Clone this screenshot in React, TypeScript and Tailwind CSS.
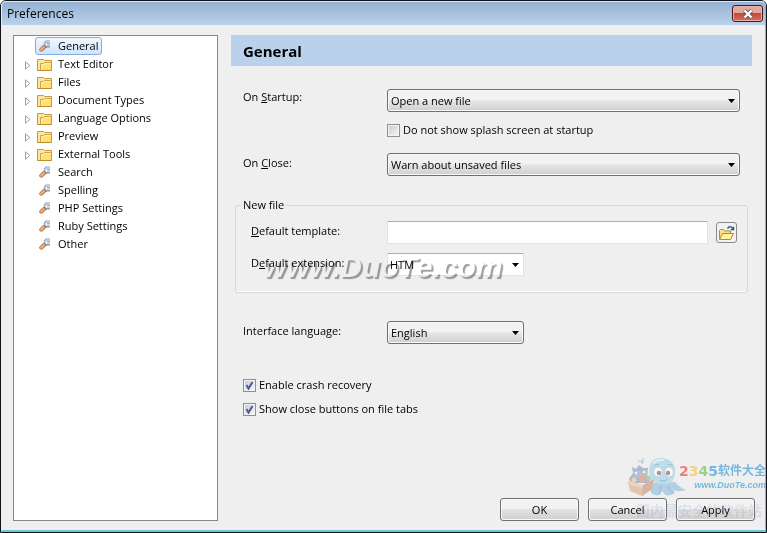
import type { ReactNode } from "react";

const tree = [
  { name: "General", folder: false, active: true },
  { name: "Text Editor", folder: true },
  { name: "Files", folder: true },
  { name: "Document Types", folder: true },
  { name: "Language Options", folder: true },
  { name: "Preview", folder: true },
  { name: "External Tools", folder: true },
  { name: "Search", folder: false },
  { name: "Spelling", folder: false },
  { name: "PHP Settings", folder: false },
  { name: "Ruby Settings", folder: false },
  { name: "Other", folder: false },
];

function FolderIcon() {
  return (
    <svg viewBox="0 0 15 13" className="h-[13px] w-[15px] shrink-0">
      <path d="M.5 12.5V1.500h6l1 1h7v10z" fill="#fbe6a0" stroke="#c89a3e" />
      <path d="M3.500 12V5.500h3l1-1h7" fill="none" stroke="#d0a246" />
      <path d="M4 12V6.500h3l1-1h6V12z" fill="#ffe074" />
      <path d="M4.500 11.500V6.500h3l1-1H14" fill="none" stroke="#fff0ae" />
      <path d="M.5 12.500h14" stroke="#c08c2a" />
    </svg>
  );
}

function WrenchIcon() {
  return (
    <svg viewBox="0 0 12 12" className="h-3 w-3 shrink-0">
      <path d="M10.800 1.500H7.200L5.700 3V5.800L7 7.200 8.500 6.500H10.800" fill="none" stroke="#8e99ad" strokeWidth="1.800" />
      <path d="M10.500 1.500H7.400L6 3.100V5.500L7.200 6.600" fill="none" stroke="#d5dde9" strokeWidth=".8" />
      <path d="M8 3.800h3" stroke="#8e99ad" strokeWidth="1.200" />
      <path d="M2.300 9.700 5 7" stroke="#b0713f" strokeWidth="4" strokeLinecap="round" />
      <path d="M2.200 9.600 4.700 7.100" stroke="#e4b48c" strokeWidth="2.200" strokeLinecap="round" />
    </svg>
  );
}

function OpenFileIcon() {
  return (
    <svg viewBox="0 0 17 16" className="h-4 w-[17px]">
      <path d="M1.500 14V5.500l1-1h3l1.200 1.500h5.800V8" fill="#f8e08c" stroke="#b98a2c" />
      <path d="M1.500 14.500 4.500 8.500H15.500L12.500 14.500z" fill="#fdf3a0" stroke="#b98a2c" strokeLinejoin="round" />
      <path d="M9.500 3.500Q12 0 14.500 3" fill="none" stroke="#24507f" strokeWidth="1.300" />
      <path d="M16.200 1.200V5.200H12.200z" fill="#24507f" />
    </svg>
  );
}

function Octopus() {
  return (
    <svg viewBox="0 0 60 42" className="-mr-2 h-[42px] w-[60px] opacity-50">
      <path d="M26 27Q20 37 28 39 34 40 35 34 37 41 44 39 50 36 45 33 50 37 59 34 53 32 48 26z" fill="#76b2d8" />
      <path d="M33 30Q35 37 31 39M41 30Q42 35 47 37" fill="none" stroke="#4d8fbd" strokeWidth="1.200" />
      <path d="M22 15C22 5 29 1 36 2 45 3 49 10 48 17 47 26 43 29 36 28 27 28 22 23 22 15z" fill="#8bcce6" />
      <path d="M27 7Q31 3 36 4" fill="none" stroke="#d6f1fa" strokeWidth="2" strokeLinecap="round" />
      <path d="M27 10Q30 7 32 9M41 9Q44 7 46 10" fill="none" stroke="#4585a8" />
      <ellipse cx="31" cy="16" rx="4.500" ry="5" fill="#fff" stroke="#6f9cb6" strokeWidth=".7" />
      <ellipse cx="42" cy="16" rx="4.500" ry="5" fill="#fff" stroke="#6f9cb6" strokeWidth=".7" />
      <circle cx="32" cy="17" r="2.300" fill="#584341" />
      <circle cx="41" cy="17" r="2.300" fill="#584341" />
      <path d="M33 24Q37 27 40 23" fill="none" stroke="#457b9a" />
      <path d="M6 17 5 11 9 13 12 9 16 12 21 12 20 20 24 22 22 27H4L2 23z" fill="#6d86ad" />
      <circle cx="10" cy="18" r="4" fill="#7797cc" />
      <circle cx="17" cy="17" r="3.500" fill="#8891aa" />
      <circle cx="9" cy="17" r="1.200" fill="#fff" />
      <circle cx="17" cy="16" r="1.200" fill="#fff" />
      <circle cx="15" cy="23" r="3" fill="#e66c4a" />
      <circle cx="21" cy="22" r="2.500" fill="#72b060" />
      <circle cx="7" cy="24" r="2.500" fill="#e7c44e" />
      <path d="M1 25 16 29 27 23 25 33 15 40 3 35z" fill="#d99a70" />
      <path d="M16 29 27 23 25 33 15 40z" fill="#c07b57" />
      <path d="M1 25 0 28 15 32 16 29z" fill="#edbd96" />
      <path d="M11 5h4v3M16 2v5" fill="none" stroke="#7d93b0" />
    </svg>
  );
}

function Arrow() {
  return (
    <svg viewBox="0 0 7 4" className="pointer-events-none absolute right-[5px] top-[10px] h-1 w-[7px]">
      <path d="M0 0h7L3.500 4z" />
    </svg>
  );
}

function Select({ id, value, className }: { id: string; value: string; className: string }) {
  return (
    <div className={`relative ${className}`}>
      <select
        id={id}
        className="block h-[23px] w-full appearance-none rounded-[3px] border border-[#707070] bg-linear-to-b from-[#f2f2f2] from-45% via-[#e4e4e4] via-55% to-[#cfcfcf] px-[3px] shadow-[inset_0_0_0_1px_#f8f8f8]"
      >
        <option>{value}</option>
      </select>
      <Arrow />
    </div>
  );
}

function Check({ label, checked }: { label: string; checked?: boolean }) {
  return (
    <label className="flex h-4 w-fit items-center gap-[3px]">
      <span className="relative flex">
        <input
          type="checkbox"
          defaultChecked={checked}
          className="peer h-[13px] w-[13px] appearance-none border border-[#8e8f8f] bg-linear-to-br from-[#c4cad4] to-[#f8f8f8] shadow-[inset_0_0_0_1px_#f4f4f4]"
        />
        <svg
          viewBox="0 0 13 13"
          className="pointer-events-none absolute inset-0 hidden h-[13px] w-[13px] peer-checked:block"
        >
          <path d="M3.500 6 5.500 9.500 9.500 3" fill="none" stroke="#4d5c96" strokeWidth="2" />
        </svg>
      </span>
      {label}
    </label>
  );
}

function Button({ children }: { children: ReactNode }) {
  return (
    <button className="h-[23px] w-[79px] rounded-[3px] border border-[#707070] bg-linear-to-b from-[#f3f3f3] from-45% via-[#e2e2e2] via-50% to-[#d0d0d0] shadow-[inset_0_0_0_1px_#f8f8f8]">
      {children}
    </button>
  );
}

export default function App() {
  return (
    <div className="min-h-screen bg-white">
      <div className="relative flex min-h-screen flex-col rounded-t-md border border-[#10141c] bg-[#efefef] font-['Open_Sans',sans-serif] text-[11px] leading-4 text-black">
        <div className="flex grow flex-col rounded-t-[5px] border border-b-2 border-l-[#e4edf5] border-t-[#dce9f5] border-r-[#5cc8ef] border-b-[#72c4d8]">
          <header className="flex h-[23px] items-center justify-between rounded-t-[4px] bg-linear-to-b from-[#96b2d2] to-[#b9d1ea] pl-[5px] pr-[2px]">
            <h1 className="text-xs">Preferences</h1>
            <button
              aria-label="Close"
              className="flex h-[17px] w-[31px] items-center justify-center rounded-[3px] border border-[#4b1822] bg-linear-to-b from-[#e2a79c] from-45% via-[#c14a35] via-50% to-[#d4705c] shadow-[inset_0_0_0_1px_#e6b0a5]"
            >
              <svg viewBox="0 0 12 10" className="h-[10px] w-3">
                <path d="M2.500 1.500 9.500 8.500M9.500 1.500 2.500 8.500" stroke="#5b5560" strokeWidth="4" />
                <path d="M2.500 1.500 9.500 8.500M9.500 1.500 2.500 8.500" stroke="#fff" strokeWidth="2.400" />
              </svg>
            </button>
          </header>

          <div className="flex grow gap-[13px] pb-[9px] pl-[11px] pr-[10px] pt-[10px]">
            <nav className="w-[205px] shrink-0 border border-[#828790] bg-white pt-px">
              <ul>
                {tree.map((item) => (
                  <li key={item.name} className="flex h-[18px] items-center pl-[11px]">
                    <svg viewBox="0 0 6 9" className="mt-0.5 h-[9px] w-[6px]">
                      {item.folder && <path d="M.5.8V8.200L4.800 4.500z" fill="#fff" stroke="#a0a0a0" />}
                    </svg>
                    <a
                      href="#"
                      className={
                        item.active
                          ? "ml-1 flex h-[18px] items-center rounded-[3px] border border-[#84acdd] bg-linear-to-b from-[#f0f8ff] to-[#cfe5fb] pr-[3px]"
                          : "ml-1 flex h-[18px] items-center border border-transparent pr-[3px]"
                      }
                    >
                      <span className="flex w-[22px] pl-px">
                        {item.folder ? (
                          <FolderIcon />
                        ) : (
                          <span className="pl-[2px]">
                            <WrenchIcon />
                          </span>
                        )}
                      </span>
                      {item.name}
                    </a>
                  </li>
                ))}
              </ul>
            </nav>

            <main className="flex grow flex-col">
              <h2 className="mr-[3px] flex h-[31px] items-center bg-[#b9d1ea] pl-3 text-[15px] font-bold">General</h2>

              <form className="mr-[3px] flex flex-col pt-[23px]">
                <div className="flex pl-3 pr-3">
                  <label htmlFor="startup" className="w-36 leading-4">
                    On <u>S</u>tartup:
                  </label>
                  <Select id="startup" value="Open a new file" className="grow" />
                </div>
                <div className="mt-[10px] pl-[156px]">
                  <Check label="Do not show splash screen at startup" />
                </div>
                <div className="mt-[15px] flex pl-3 pr-3">
                  <label htmlFor="close" className="w-36 leading-5">
                    On <u>C</u>lose:
                  </label>
                  <Select id="close" value="Warn about unsaved files" className="grow" />
                </div>

                <fieldset className="ml-1 mr-1 mt-[21px] rounded-[3px] border border-[#d5d9dc] pb-4 pl-[15px] pr-[10px] shadow-[inset_0_-1px_0_#fff]">
                  <legend className="-ml-[10px] px-[2px]">New file</legend>
                  <div className="mt-2 flex">
                    <label htmlFor="template" className="w-[136px] leading-5">
                      <u>D</u>efault template:
                    </label>
                    <input
                      id="template"
                      type="text"
                      className="h-[23px] min-w-0 grow border border-[#e2e3ea] border-t-[#abadb3] bg-white px-1"
                    />
                    <button
                      type="button"
                      aria-label="Browse"
                      className="ml-2 mt-px flex h-[21px] w-[21px] items-center justify-center rounded-[3px] border border-[#8a8a8a] bg-[#f1f1f1]"
                    >
                      <OpenFileIcon />
                    </button>
                  </div>
                  <div className="mt-[9px] flex">
                    <label htmlFor="extension" className="w-[136px] leading-5">
                      D<u>e</u>fault extension:
                    </label>
                    <div className="relative w-[137px]">
                      <input
                        id="extension"
                        type="text"
                        defaultValue="HTM"
                        className="block h-[23px] w-full border border-[#e2e3ea] border-t-[#abadb3] bg-white px-[2px]"
                      />
                      <Arrow />
                    </div>
                  </div>
                </fieldset>

                <div className="mt-7 flex pl-3">
                  <label htmlFor="language" className="w-36 leading-5">
                    Interface language:
                  </label>
                  <Select id="language" value="English" className="w-[137px]" />
                </div>
                <div className="mt-[33px] flex flex-col gap-2 pl-3">
                  <Check label="Enable crash recovery" checked />
                  <Check label="Show close buttons on file tabs" checked />
                </div>
              </form>

              <div className="mt-auto flex justify-end gap-[9px]">
                <Button>OK</Button>
                <Button>Cancel</Button>
                <Button>Apply</Button>
              </div>
            </main>
          </div>
        </div>

        {/* watermarks */}
        <div className="pointer-events-none absolute left-[262px] top-[250px] font-['Liberation_Sans',sans-serif] text-[30px] font-bold italic leading-8 text-white mix-blend-multiply [text-shadow:2px_2px_1px_#a0a0a0]">
          www.DuoTe.com
        </div>
        <div className="pointer-events-none absolute bottom-[34px] right-0 flex items-center font-['Liberation_Sans','Noto_Sans_CJK_SC',sans-serif] font-bold">
          <Octopus />
          <div className="flex flex-col items-end text-[#62aede] opacity-85">
            <span className="flex items-center whitespace-nowrap text-xs leading-4">
              <span className="font-['DejaVu_Sans',sans-serif] text-sm leading-4">
                <span className="text-[#ef6b68]">2</span>
                <span className="text-[#f7cf64]">3</span>
                <span className="text-[#8fcb70]">4</span>
                <span className="text-[#62aede]">5</span>
              </span>
              软件大全
            </span>
            <span className="text-[9px] italic leading-3">www.DuoTe.com</span>
          </div>
        </div>
        <div className="pointer-events-none absolute bottom-[14px] right-1 font-['Noto_Sans_CJK_SC',sans-serif] text-sm font-bold leading-4 text-[#5f7fae] opacity-15">
          国内最安全的软件站
        </div>
      </div>
    </div>
  );
}
